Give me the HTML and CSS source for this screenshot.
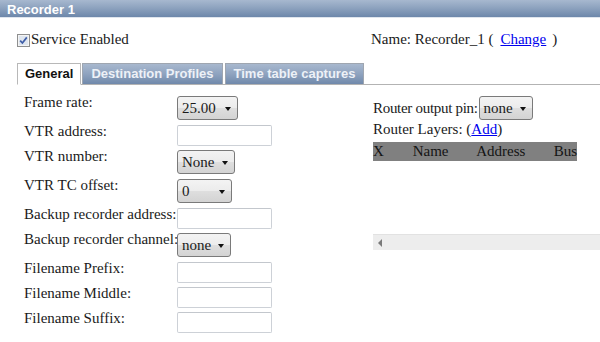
FILE: index.html
```html
<!DOCTYPE html>
<html>
<head>
<meta charset="utf-8">
<title>Recorder 1</title>
<link rel="stylesheet" href="styles.css">
</head>
<body>
<div class="titlebar">Recorder 1</div>
<div class="main">
  <div class="top-row">
    <div class="service">
      <span class="checkbox"><svg width="13" height="13" viewBox="0 0 13 13"><rect x="0.5" y="0.5" width="12" height="12" fill="#f4f4f4" stroke="#8e8f8f"/><rect x="2" y="2" width="9" height="9" fill="#dfe6ef"/><path d="M3.2 6.6 L5.4 9 L9.8 3.4" fill="none" stroke="#3f5ea8" stroke-width="1.7"/></svg></span>Service Enabled
    </div>
    <div class="name">Name: Recorder_1 (<a href="#" class="link change">Change</a>)</div>
  </div>

  <div class="tabs">
    <div class="tab active">General</div>
    <div class="tab">Destination Profiles</div>
    <div class="tab">Time table captures</div>
  </div>

  <div class="panel">
    <div class="form">
      <div class="row sel-row">
        <span class="label">Frame rate:</span>
        <span class="select w61"><span>25.00</span><span class="arrow"></span></span>
      </div>
      <div class="row in-row">
        <span class="label">VTR address:</span>
        <span class="input"></span>
      </div>
      <div class="row sel-row">
        <span class="label">VTR number:</span>
        <span class="select w58"><span>None</span><span class="arrow"></span></span>
      </div>
      <div class="row sel-row">
        <span class="label">VTR TC offset:</span>
        <span class="select w55"><span>0</span><span class="arrow"></span></span>
      </div>
      <div class="row in-row">
        <span class="label">Backup recorder address:</span>
        <span class="input"></span>
      </div>
      <div class="row sel-row">
        <span class="label">Backup recorder channel:</span>
        <span class="select w54"><span>none</span><span class="arrow"></span></span>
      </div>
      <div class="row in-row">
        <span class="label">Filename Prefix:</span>
        <span class="input"></span>
      </div>
      <div class="row in-row">
        <span class="label">Filename Middle:</span>
        <span class="input"></span>
      </div>
      <div class="row in-row">
        <span class="label">Filename Suffix:</span>
        <span class="input"></span>
      </div>
    </div>

    <div class="right">
      <div class="pin-row">
        <span class="pin-label">Router output pin:</span>
        <span class="select w54 pin-select"><span>none</span><span class="arrow"></span></span>
      </div>
      <div class="layers">Router Layers: (<a href="#" class="link">Add</a>)</div>
      <div class="layers-head">
        <span class="col-x">X</span>
        <span class="col-name">Name</span>
        <span class="col-addr">Address</span>
        <span class="col-bus">Bus</span>
      </div>
      <div class="layers-body"></div>
      <div class="hscroll"><span class="scroll-left"></span></div>
    </div>
  </div>
</div>
</body>
</html>
```

FILE: styles.css
```css
html, body {
  margin: 0;
  padding: 0;
  background: #ffffff;
}

body {
  width: 600px;
  height: 342px;
  overflow: hidden;
  font-family: "Liberation Serif", "Times New Roman", serif;
  font-size: 15px;
  color: #1a1a1a;
}

.titlebar {
  height: 18px;
  box-sizing: border-box;
  padding: 2px 0 0 7px;
  line-height: 16px;
  font-family: "Liberation Sans", Arial, sans-serif;
  font-weight: bold;
  font-size: 13px;
  color: #ffffff;
  background: linear-gradient(#a7b8cf, #8ea3bf 45%, #6d87aa);
  border-bottom: 1px solid #dfe5ed;
}

.main {
  padding-left: 17px;
}

.top-row {
  display: flex;
  margin-top: 13px;
  line-height: 17px;
}

.service {
  width: 354px;
  display: flex;
  align-items: baseline;
}

.checkbox {
  display: inline-block;
  width: 13px;
  height: 13px;
  margin-right: 1px;
  position: relative;
  top: 3px;
}

.checkbox svg {
  display: block;
}

.link {
  color: #0000ee;
  text-decoration: underline;
}

.change {
  margin: 0 6px 0 7px;
}

.tabs {
  display: flex;
  margin-top: 15px;
  border-bottom: 1px solid #b3b3b3;
  height: 21px;
}

.tab {
  height: 20px;
  line-height: 19px;
  padding: 0 8px;
  margin-right: 2px;
  border: 1px solid #9fa6b0;
  border-bottom: none;
  font-family: "Liberation Sans", Arial, sans-serif;
  font-weight: bold;
  font-size: 13px;
  color: #edf1f7;
  background: linear-gradient(#a8b8ce, #8fa3bf 50%, #7089ab);
}

.tab.active {
  padding: 0 7px;
  margin-right: 1px;
  color: #111111;
  background: #ffffff;
  border-color: #b8b8b8;
  border-bottom: 1px solid #ffffff;
  box-sizing: border-box;
  height: 22px;
}

.panel {
  display: flex;
  padding-top: 9px;
}

.form {
  width: 356px;
  flex: none;
  padding-left: 7px;
  box-sizing: border-box;
}

.row {
  display: flex;
  align-items: flex-start;
}

.sel-row {
  margin-bottom: 3px;
}

.in-row {
  margin-bottom: 2px;
}

.label {
  width: 153px;
  flex: none;
  line-height: 17px;
  white-space: nowrap;
}

.select {
  display: flex;
  align-items: center;
  justify-content: space-between;
  box-sizing: border-box;
  height: 24px;
  margin-top: 2px;
  padding: 0 6px 0 4px;
  border: 1px solid #7a7a7a;
  border-radius: 3px;
  line-height: 22px;
  background: linear-gradient(#f3f3f3, #ececec 48%, #dedede 52%, #d3d3d3);
}

.w61 { width: 61px; }
.w58 { width: 58px; }
.w55 { width: 55px; }
.w54 { width: 54px; }

.arrow {
  width: 0;
  height: 0;
  border-left: 3.5px solid transparent;
  border-right: 3.5px solid transparent;
  border-top: 4px solid #111111;
  margin-top: 1px;
}

.input {
  display: block;
  box-sizing: border-box;
  width: 95px;
  height: 21px;
  margin-top: 2px;
  border: 1px solid #cdd1d7;
  border-top-color: #c3c7cd;
  border-radius: 2px;
  background: #ffffff;
}

.right {
  flex: 1;
  display: flex;
  flex-direction: column;
}

.pin-row {
  display: flex;
  align-items: baseline;
  line-height: 17px;
}

.pin-label {
  margin-right: 1px;
  letter-spacing: -0.3px;
}

.layers {
  line-height: 17px;
  margin-top: 1px;
}

.layers-head {
  display: flex;
  width: 204px;
  height: 19px;
  line-height: 19px;
  margin-top: 4px;
  background: #808080;
  color: #141414;
}

.col-x { width: 40px; }
.col-name { width: 64px; }
.col-addr { width: 78px; }
.col-bus { flex: 1; }

.layers-body {
  height: 73px;
}

.hscroll {
  display: flex;
  align-items: center;
  height: 16px;
  box-sizing: border-box;
  border-top: 1px solid #e2e2e2;
  background: #ededed;
  padding-left: 5px;
}

.scroll-left {
  width: 0;
  height: 0;
  border-top: 4px solid transparent;
  border-bottom: 4px solid transparent;
  border-right: 4px solid #7a7a7a;
}
```
